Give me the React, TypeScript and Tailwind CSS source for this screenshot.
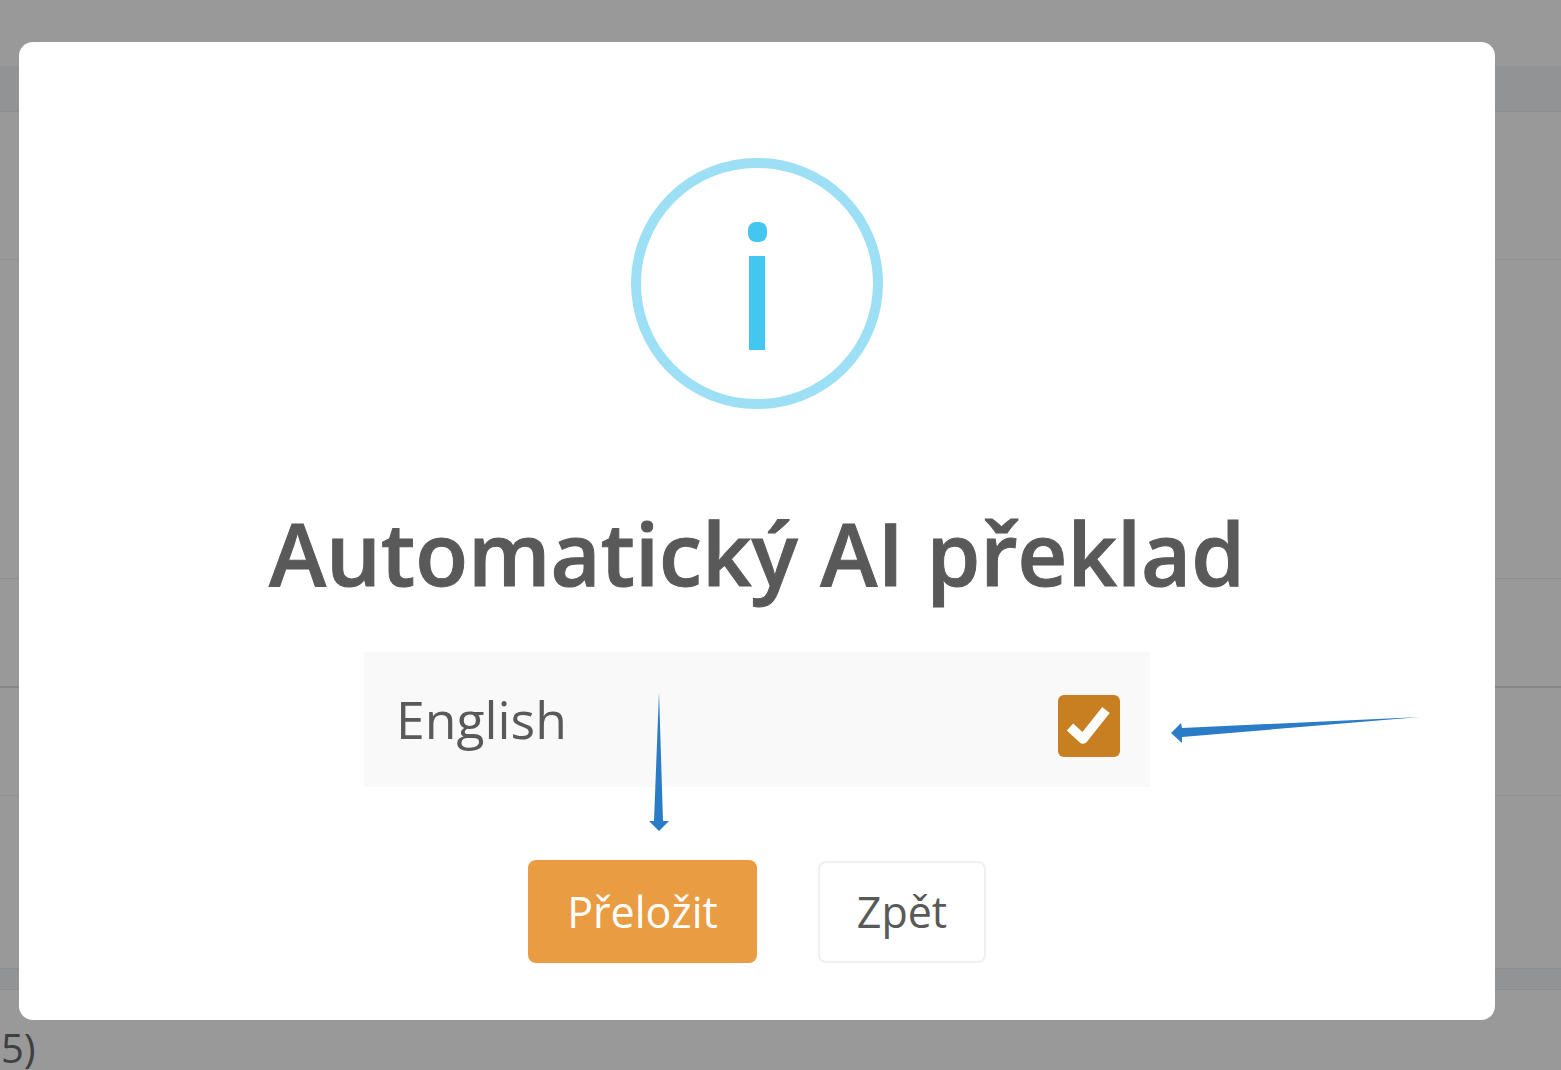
import React from 'react';

const font = { fontFamily: '"Open Sans", "Liberation Sans", sans-serif' };

function BackgroundPage() {
  return (
    <div className="flex flex-col">
      <div className="h-[66px]" />
      <div className="h-[46px] bg-[#919395] border-b border-[#8d8d8d]" />
      <div className="h-[148px] border-b border-[#8f8f8f]" />
      <div className="h-[319px] border-b border-[#8f8f8f]" />
      <div className="h-[109px] border-b-2 border-[#878787]" />
      <div className="h-[108px] border-b border-[#8f8f8f]" />
      <div className="h-[172px]" />
      <div className="h-[22px] bg-[#919395] border-y border-[#8d8d8d]" />
      <div className="pl-[1px] pt-[33px] text-[40px] leading-[50px] text-[#3f3f3f]">5)</div>
    </div>
  );
}

function InfoIcon() {
  return (
    <div className="flex flex-col items-center w-[252px] h-[251px] rounded-full border-[10px] border-[#9de0f6]">
      <div className="mt-[54px] w-[19px] h-[20px] rounded-[8px] bg-[#43c6f0]" />
      <div className="mt-[14px] w-[16px] h-[94px] bg-[#43c6f0]" />
    </div>
  );
}

export default function App() {
  return (
    <div className="relative h-[1070px] overflow-hidden bg-[#999999]" style={font}>
      <BackgroundPage />

      <div className="absolute left-[19px] top-[42px] w-[1476px] h-[978px] rounded-[14px] bg-white flex flex-col items-center pt-[116px]">
        <InfoIcon />

        <h2 className="mt-[85px] text-[86.5px] leading-[118px] font-semibold [-webkit-text-stroke:1px_#595959] text-[#595959] whitespace-nowrap">
          Automatický AI překlad
        </h2>

        <div className="mt-[40px] flex justify-between w-[786px] h-[135px] bg-[#f9f9f9] pl-[32px] pr-[30px]">
          <span className="mt-[32px] text-[51.7px] leading-[70px] text-[#595959]">English</span>
          <span className="mt-[43px] w-[62px] h-[62px] rounded-[6px] bg-[#c77f21]">
            <svg width="62" height="62" viewBox="0 0 62 62">
              <polyline points="12,32 25,44 48,15" fill="none" stroke="#ffffff" strokeWidth="9.5" strokeLinejoin="round" />
            </svg>
          </span>
        </div>

        <div className="mt-[73px] flex items-start gap-[61px]">
          <button className="w-[229px] h-[103px] pt-[2px] rounded-[8px] bg-[#e99c41] text-[43px] text-white">
            Přeložit
          </button>
          <button className="w-[168px] h-[102px] mt-[1px] rounded-[8px] bg-white border-2 border-[#f0f0f0] text-[43px] text-[#595959]">
            Zpět
          </button>
        </div>

        {/* annotation arrows pasted on top of the screenshot */}
        <svg className="absolute left-[1140px] top-[670px]" width="270" height="40" viewBox="0 0 270 40">
          <polygon
            points="261,5 23,16 22,11 12,21 23,31 23,25"
            fill="#2a7cc7"
          />
        </svg>
        <svg className="absolute left-[620px] top-[645px]" width="40" height="150" viewBox="0 0 40 150">
          <polygon
            points="20,5 15,134 10,134 20,144 30,134 24,134"
            fill="#2a7cc7"
          />
        </svg>
      </div>
    </div>
  );
}
